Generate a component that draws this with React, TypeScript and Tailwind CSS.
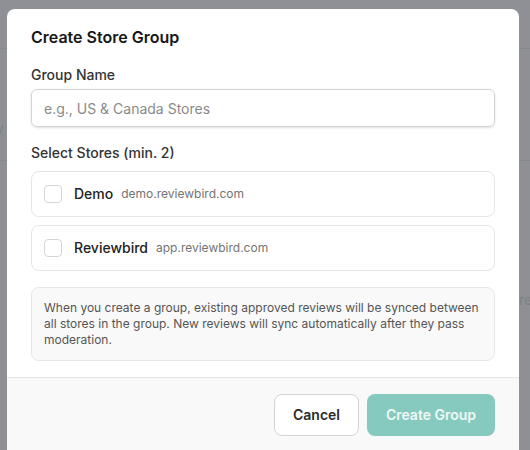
import { useState } from "react";

const stores = [
  { id: "demo", name: "Demo", domain: "demo.reviewbird.com" },
  { id: "reviewbird", name: "Reviewbird", domain: "app.reviewbird.com" },
];

export default function App() {
  const [name, setName] = useState("");
  const [picked, setPicked] = useState<string[]>([]);

  const toggle = (id: string) =>
    setPicked((p) => (p.includes(id) ? p.filter((x) => x !== id) : [...p, id]));

  return (
    <div
      className="relative h-[450px] w-[530px] overflow-hidden bg-[#8e9095]"
      style={{ fontFamily: "Inter, 'Noto Sans', sans-serif" }}
    >
      {/* page behind the overlay */}
      <div className="absolute left-0 right-0 top-[48px] h-px bg-[#858890]" />
      <div className="absolute left-0 right-0 top-[160px] h-px bg-[#858890]" />
      <span className="absolute left-[-4px] top-[118px] text-sm text-[#7e8188]">y</span>
      <span className="absolute left-[519px] top-[290px] text-sm text-[#7e8188]">re</span>

      <div className="absolute left-[7px] top-[9px] w-[512px] overflow-hidden rounded-t-lg bg-white">
        <div className="px-6 pb-4 pt-4">
          <h2 className="text-base font-semibold leading-6 text-[#171717]">Create Store Group</h2>

          <label className="mt-4 block text-sm font-medium leading-5 text-[#333]">Group Name</label>
          <input
            value={name}
            onChange={(e) => setName(e.target.value)}
            placeholder="e.g., US & Canada Stores"
            className="mt-1 block h-[38px] w-full rounded-md border border-[#d4d4d4] px-3 text-sm text-[#222] shadow-sm outline-none placeholder:text-[#8a8a8a]"
          />

          <p className="mt-4 text-sm font-medium leading-5 text-[#333]">Select Stores (min. 2)</p>
          <div className="mt-2 flex flex-col gap-2">
            {stores.map((s) => (
              <label
                key={s.id}
                className="flex h-[46px] cursor-pointer items-center rounded-lg border border-[#e5e5e5] px-3"
              >
                <input
                  type="checkbox"
                  checked={picked.includes(s.id)}
                  onChange={() => toggle(s.id)}
                  className="h-[18px] w-[18px] appearance-none rounded border border-[#d4d4d4] bg-white checked:bg-[#3aa595]"
                />
                <span className="ml-3 text-sm font-medium text-[#222]">{s.name}</span>
                <span className="ml-2 text-xs text-[#737373]">{s.domain}</span>
              </label>
            ))}
          </div>

          <div className="mt-4 rounded-lg border border-[#e7e7e7] bg-[#f9f9fa] px-3 py-3 text-xs leading-4 text-[#555]">
            When you create a group, existing approved reviews will be synced between all stores in the
            group. New reviews will sync automatically after they pass moderation.
          </div>
        </div>

        <div className="flex h-[80px] justify-end gap-2 border-t border-[#e5e5e5] bg-[#f9f9fa] px-6 pt-4">
          <button className="h-[42px] w-[85px] rounded-lg border border-[#d4d4d4] bg-white text-sm font-semibold text-[#2a2a2a]">
            Cancel
          </button>
          <button
            disabled={picked.length < 2 || !name}
            className="h-[42px] w-[128px] rounded-lg bg-[#86cabf] text-sm font-semibold text-[#eef8f6]"
          >
            Create Group
          </button>
        </div>
      </div>
    </div>
  );
}
